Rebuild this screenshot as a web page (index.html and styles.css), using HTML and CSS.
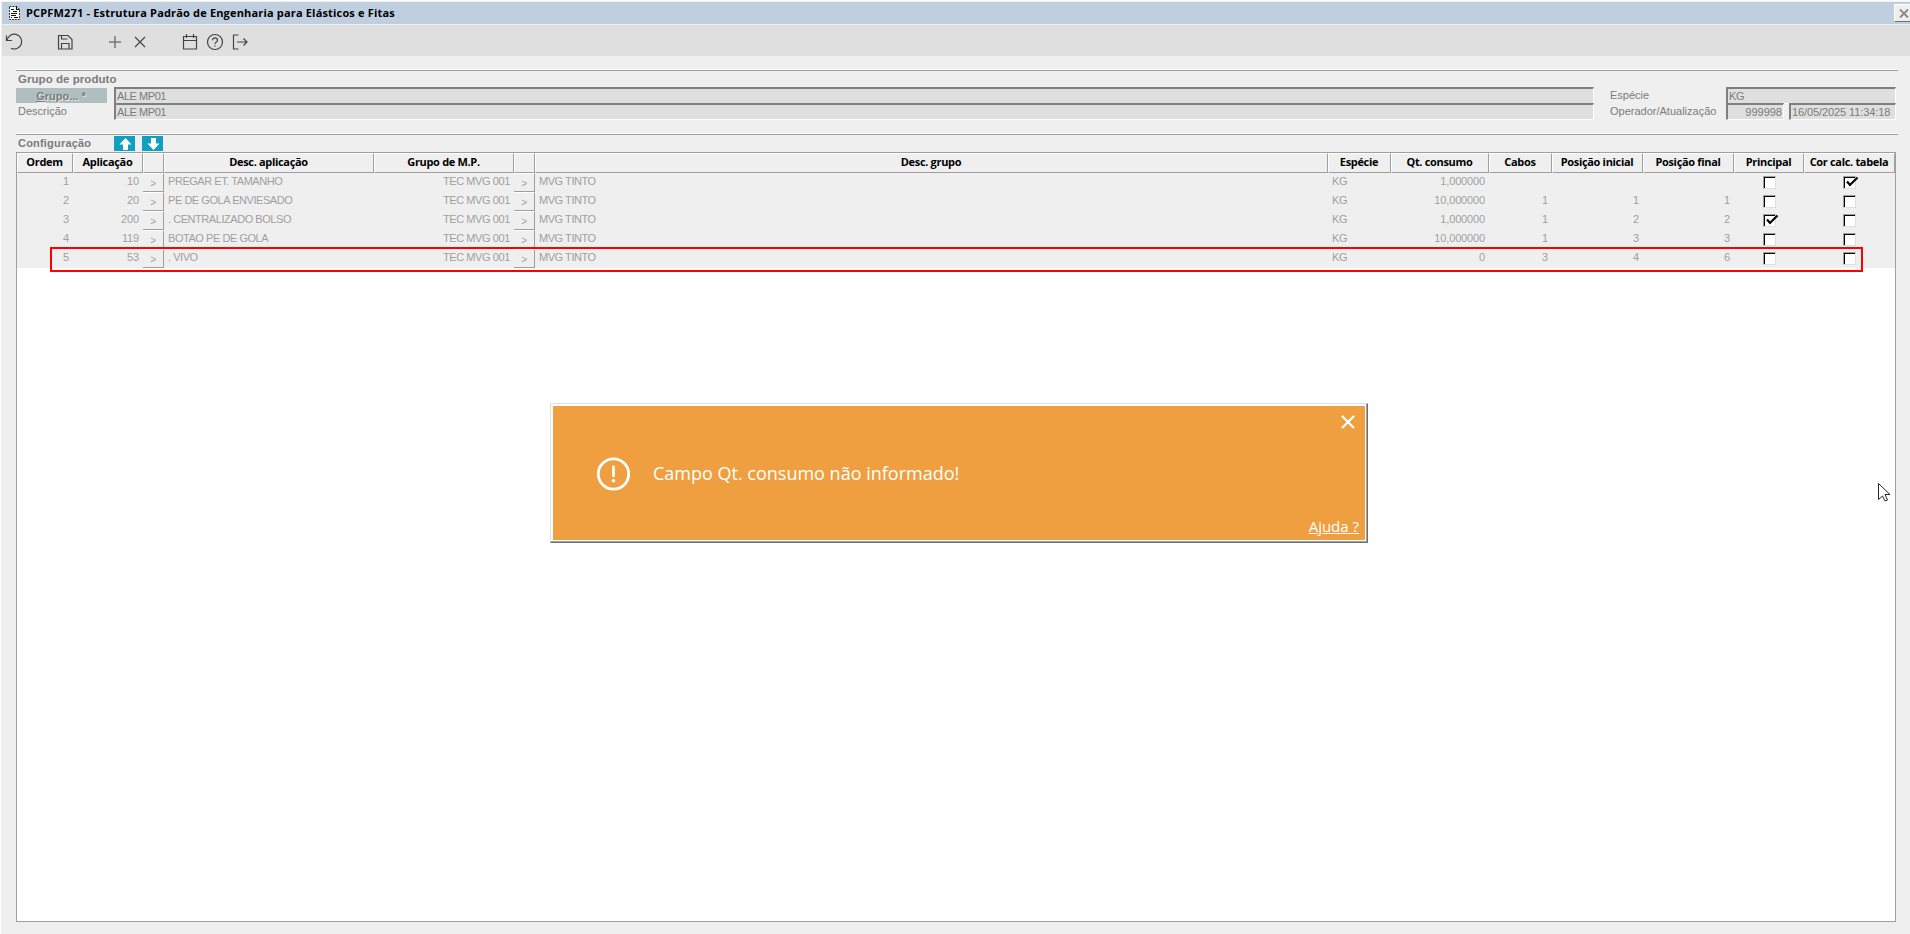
FILE: index.html
```html
<!DOCTYPE html>
<html lang="pt-BR">
<head>
    <meta charset="UTF-8">
    <title>PCPFM271 - Estrutura Padrão de Engenharia para Elásticos e Fitas</title>
    <link rel="stylesheet" href="styles.css">
</head>
<body>
    <div class="titlebar">
        <svg class="docIcon" width="13" height="16" viewBox="0 0 13 16">
            <path d="M1.500 1.500h7.500l2.500 3v10h-10z" fill="#fff" stroke="#333" stroke-dasharray="2 1"/>
            <path d="M8.500 1v3.500h3M3 4.500h3M5 6.500h4M3 8.500h6M3 10.500h5M6 12.500h4M3 12.500h1" fill="none" stroke="#111" stroke-width="1.200"/>
        </svg>
        <span class="titleText">PCPFM271 - Estrutura Padrão de Engenharia para Elásticos e Fitas</span>
        <span class="winClose">
            <svg width="10" height="9" viewBox="0 0 10 9"><path d="M1 0.500l8 8M9 0.500l-8 8" stroke="#8a8a8a" stroke-width="2"/></svg>
        </span>
    </div>
    <div class="toolbar">
        <svg width="250" height="31" viewBox="0 0 250 31" fill="none" stroke="#444" stroke-width="1.200">
            <path d="M4.500 10.500v5h5.500M5 15.500A7.400 7.400 0 1 1 9 23.200"/>
            <path d="M56.500 10.500h9.500l4 4v9.500h-13.500zM59.500 10.500v3.500h6M59.500 24v-5.500h7.500v5.500"/>
            <path d="M113 11v12M107 17h12" stroke="#777" stroke-width="1.500"/>
            <path d="M133 12l10 10M143 12l-10 10"/>
            <path d="M181.500 11.500h13v12.500h-13zM181.500 15.500h13M184.500 9v4M191.500 9v4"/>
            <circle cx="213" cy="17" r="7.500"/>
            <path d="M210.500 15.300c0-3.300 5-3.200 5 0c0 1.800-2.500 1.700-2.500 3.700M213 20.300v1.200"/>
            <path d="M236.500 10h-5v14h5M235 17h10M241.500 13.500l3.500 3.500-3.500 3.500"/>
        </svg>
    </div>
    <div class="content">
        <div class="group">
            <p class="groupTitle"><b>Grupo de produto</b></p>
            <div class="form">
                <div class="labels">
                    <div class="groupButton"><b><u>G</u>rupo... *</b></div>
                    <div class="label">Descrição</div>
                </div>
                <div class="fields">
                    <div class="field">ALE MP01</div>
                    <div class="field">ALE MP01</div>
                </div>
                <div class="labels rightLabels">
                    <div class="label">Espécie</div>
                    <div class="label">Operador/Atualização</div>
                </div>
                <div class="rightFields">
                    <div class="field">KG</div>
                    <div class="pair">
                        <div class="field operator">999998</div>
                        <div class="field date">16/05/2025 11:34:18</div>
                    </div>
                </div>
            </div>
        </div>
        <div class="group config">
            <div class="configBar">
                <b class="configTitle">Configuração</b>
                <span class="arrow"><svg width="21" height="15" viewBox="0 0 21 15"><path d="M11.500 2l6 6.500h-3.500v5.500h-5v-5.500h-3.500z" fill="#fff"/></svg></span>
                <span class="arrow"><svg width="21" height="15" viewBox="0 0 21 15"><path d="M11.500 14l6-6.500h-3.500v-5.500h-5v5.500h-3.500z" fill="#fff"/></svg></span>
            </div>
            <div class="grid">
                <table>
                    <colgroup>
                        <col class="c56"><col class="c70"><col class="c21"><col class="c210"><col class="c140"><col class="c21"><col class="c793"><col class="c63"><col class="c98"><col class="c63"><col class="c91"><col class="c91"><col class="c70"><col class="c91">
                    </colgroup>
                    <thead>
                        <tr><th>Ordem</th><th>Aplicação</th><th></th><th>Desc. aplicação</th><th>Grupo de M.P.</th><th></th><th>Desc. grupo</th><th>Espécie</th><th>Qt. consumo</th><th>Cabos</th><th>Posição inicial</th><th>Posição final</th><th>Principal</th><th>Cor calc. tabela</th></tr>
                    </thead>
                    <tbody>
                        <tr><td class="num">1</td><td class="num">10</td><td class="more">&gt;</td><td>PREGAR ET. TAMANHO</td><td class="code">TEC MVG 001</td><td class="more">&gt;</td><td>MVG TINTO</td><td>KG</td><td class="num">1,000000</td><td class="num"></td><td class="num"></td><td class="num"></td><td><i class="check"></i></td><td><i class="check last"><svg width="13" height="9" viewBox="0 0 13 9"><path d="M2 3.500l3 3.500L12.500 -0.500" fill="none" stroke="#000" stroke-width="2.200"/></svg></i></td></tr>
                        <tr><td class="num">2</td><td class="num">20</td><td class="more">&gt;</td><td>PE DE GOLA ENVIESADO</td><td class="code">TEC MVG 001</td><td class="more">&gt;</td><td>MVG TINTO</td><td>KG</td><td class="num">10,000000</td><td class="num">1</td><td class="num">1</td><td class="num">1</td><td><i class="check"></i></td><td><i class="check last"></i></td></tr>
                        <tr><td class="num">3</td><td class="num">200</td><td class="more">&gt;</td><td>. CENTRALIZADO BOLSO</td><td class="code">TEC MVG 001</td><td class="more">&gt;</td><td>MVG TINTO</td><td>KG</td><td class="num">1,000000</td><td class="num">1</td><td class="num">2</td><td class="num">2</td><td><i class="check"><svg width="13" height="9" viewBox="0 0 13 9"><path d="M2 3.500l3 3.500L12.500 -0.500" fill="none" stroke="#000" stroke-width="2.200"/></svg></i></td><td><i class="check last"></i></td></tr>
                        <tr><td class="num">4</td><td class="num">119</td><td class="more">&gt;</td><td>BOTAO PE DE GOLA</td><td class="code">TEC MVG 001</td><td class="more">&gt;</td><td>MVG TINTO</td><td>KG</td><td class="num">10,000000</td><td class="num">1</td><td class="num">3</td><td class="num">3</td><td><i class="check"></i></td><td><i class="check last"></i></td></tr>
                        <tr><td class="num">5</td><td class="num">53</td><td class="more">&gt;</td><td>. VIVO</td><td class="code">TEC MVG 001</td><td class="more">&gt;</td><td>MVG TINTO</td><td>KG</td><td class="num">0</td><td class="num">3</td><td class="num">4</td><td class="num">6</td><td><i class="check"></i></td><td><i class="check last"></i></td></tr>
                    </tbody>
                </table>
            </div>
        </div>
    </div>
    <div class="highlight"></div>
    <div class="alert">
        <div class="alertBody">
            <svg width="34" height="34" viewBox="0 0 34 34" fill="none" stroke="#fff">
                <circle cx="17.500" cy="17" r="15.200" stroke-width="2.800"/>
                <path d="M17.500 10v9" stroke-width="2.800" stroke-linecap="round"/>
                <circle cx="17.500" cy="23.800" r="1.800" fill="#fff" stroke="none"/>
            </svg>
            <span class="alertText">Campo Qt. consumo não informado!</span>
        </div>
        <svg class="alertClose" width="14" height="14" viewBox="0 0 14 14"><path d="M1 1l12 12M13 1L1 13" stroke="#fff" stroke-width="2.200"/></svg>
        <a class="help">Ajuda ?</a>
    </div>
    <svg class="cursor" width="14" height="21" viewBox="0 0 14 21"><path d="M1.500 1.500v16l4-3.500 2.500 5 2.500-1-2.500-5.500h5z" fill="#fff" stroke="#223"/></svg>
</body>
</html>
```
FILE: styles.css
```css
* {
    box-sizing: border-box;
}
body {
    margin: 0;
    height: 934px;
    padding: 2px 0 0 2px;
    overflow: hidden;
    background-color: #efefef;
    box-shadow: inset 1px 1px 0 #ffffff;
    color: #7b7b7b;
    font-family: "Liberation Sans", Arial, sans-serif;
    font-size: 11px;
    line-height: 15px;
    display: flex;
    flex-direction: column;
}
svg {
    display: block;
}
.titlebar {
    height: 22px;
    flex: none;
    display: flex;
    align-items: center;
    background-color: #bfcfdf;
    color: #000000;
}
.docIcon {
    margin-left: 6px;
}
.titleText {
    margin: -2px 0 0 5px;
    font-family: "Open Sans", "Noto Sans", sans-serif;
    font-size: 11px;
    font-weight: bold;
    letter-spacing: 0.17px;
}
.winClose {
    margin: 2px 0 0 auto;
    width: 16px;
    height: 18px;
    padding: 4px 0 0 4px;
    overflow: hidden;
    background-color: #efefef;
    border-top: 1px solid #ffffff;
    border-left: 1px solid #ffffff;
    border-bottom: 1px solid #707070;
    align-self: flex-start;
}
.toolbar {
    height: 31px;
    margin-top: 1px;
    flex: none;
    background-color: #dfdfdf;
}
.content {
    flex: 1;
    padding: 13px 12px 12px 14px;
    display: flex;
    flex-direction: column;
}
.group {
    border-top: 1px solid #ffffff;
    box-shadow: inset 0 1px 0 #9f9f9f;
    height: 64px;
}
.groupTitle {
    margin: 0;
    padding: 2px 0 0 2px;
    height: 17px;
    font-size: 11.500px;
    letter-spacing: 0.05px;
}
.form {
    display: flex;
}
.labels {
    width: 91px;
    padding-top: 1px;
}
.groupButton {
    height: 15px;
    padding-right: 1px;
    line-height: 16px;
    background-color: #afbfbf;
    text-align: center;
    text-shadow: 1px 1px 0 #dfe7e7;
}
.label {
    height: 16px;
    padding-left: 2px;
    line-height: 17px;
}
.fields {
    width: 1480px;
    margin-left: 7px;
}
.field {
    height: 17px;
    margin-bottom: -1px;
    padding-left: 1px;
    line-height: 14px;
    letter-spacing: -0.450px;
    white-space: nowrap;
    background-color: #dfdfdf;
    border-top: 2px solid #7f7f7f;
    border-left: 2px solid #7f7f7f;
    border-right: 1px solid #ffffff;
    border-bottom: 1px solid #ffffff;
}
.rightLabels {
    width: 117px;
    margin-left: 14px;
    padding-top: 0;
}
.rightFields {
    width: 170px;
    margin-left: 1px;
}
.pair {
    display: flex;
    justify-content: space-between;
}
.operator {
    width: 58px;
    padding-right: 1px;
    text-align: right;
    letter-spacing: 0;
}
.date {
    width: 107px;
    letter-spacing: -0.100px;
}
.config {
    height: auto;
    flex: 1;
    display: flex;
    flex-direction: column;
}
.configBar {
    height: 18px;
    padding: 2px 0 0 2px;
    display: flex;
    align-items: flex-start;
}
.configTitle {
    width: 96px;
    letter-spacing: 0.200px;
}
.arrow {
    width: 21px;
    height: 15px;
    margin-right: 7px;
    background-color: #0f9fbf;
}
.grid {
    width: 1880px;
    flex: 1;
    background-color: #ffffff;
    border: 1px solid #9f9f9f;
}
table {
    width: 1878px;
    table-layout: fixed;
    border-collapse: separate;
    border-spacing: 0;
    background-color: #efefef;
}
.c21 { width: 21px; }
.c56 { width: 56px; }
.c63 { width: 63px; }
.c70 { width: 70px; }
.c91 { width: 91px; }
.c98 { width: 98px; }
.c140 { width: 140px; }
.c210 { width: 210px; }
.c793 { width: 793px; }
th {
    height: 20px;
    padding: 0 1px 2px 0;
    border-top: 1px solid #ffffff;
    border-left: 1px solid #ffffff;
    border-right: 1px solid #9f9f9f;
    border-bottom: 1px solid #9f9f9f;
    color: #000000;
    font-family: "Open Sans", "Noto Sans", sans-serif;
    font-size: 11px;
    line-height: 16px;
    letter-spacing: -0.320px;
    white-space: nowrap;
}
td {
    height: 19px;
    padding: 1px 4px 3px;
    color: #9f9f9f;
    line-height: 15px;
    letter-spacing: -0.450px;
    vertical-align: top;
    white-space: nowrap;
}
.num {
    text-align: right;
    letter-spacing: -0.150px;
}
.code {
    text-align: right;
    letter-spacing: -0.400px;
}
.more {
    padding: 3px 0 0;
    line-height: 13px;
    font-size: 10px;
    text-align: center;
    border-top: 1px solid #ffffff;
    border-bottom: 1px solid #9f9f9f;
    border-right: 1px solid #9f9f9f;
}
.check {
    display: block;
    width: 13px;
    height: 13px;
    margin: 2px 0 -2px 25px;
    background-color: #ffffff;
    border-top: 1px solid #9f9f9f;
    border-left: 1px solid #9f9f9f;
    border-right: 1px solid #dfdfdf;
    border-bottom: 1px solid #dfdfdf;
    box-shadow: inset 1px 1px 0 #000000;
}
.last {
    margin-left: 35px;
}
.check svg {
    margin: 1px 0 0 1px;
    overflow: visible;
}
.highlight {
    position: absolute;
    left: 50px;
    top: 247px;
    width: 1813px;
    height: 25px;
    border: 2px solid #ff0000;
}
.alert {
    position: absolute;
    left: 550px;
    top: 403px;
    width: 818px;
    height: 140px;
    background-color: #ef9f3f;
    color: #ffffff;
    border: 1px solid #dfdfdf;
    border-right-color: #6f6f6f;
    border-bottom-color: #6f6f6f;
    box-shadow: inset -1px -1px 0 #9f9f9f, inset 2px 2px 0 #ffffff, inset -2px -2px 0 #ffffff;
    font-family: "Open Sans", "Noto Sans", sans-serif;
}
.alertBody {
    height: 100%;
    padding: 1px 0 0 45px;
    display: flex;
    align-items: center;
}
.alertText {
    margin: -1px 0 0 23px;
    font-size: 18px;
    line-height: 24px;
}
.alertClose {
    position: absolute;
    right: 12px;
    top: 11px;
}
.help {
    position: absolute;
    right: 8px;
    bottom: 6px;
    font-size: 15px;
    line-height: 20px;
    text-decoration: underline;
}
.cursor {
    position: absolute;
    left: 1877px;
    top: 482px;
}
```
